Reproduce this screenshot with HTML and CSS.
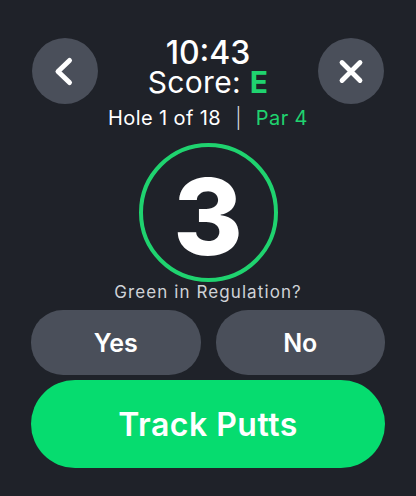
FILE: index.html
```html
<!DOCTYPE html>
<html lang="en">
<head>
    <meta charset="UTF-8">
    <meta name="viewport" content="width=device-width, initial-scale=1.0">
    <title>Hole 1 - Score</title>
    <link rel="stylesheet" href="styles.css">
</head>
<body>
    <main class="screen">
        <header class="top">
            <button class="round-btn" aria-label="Back">
                <svg width="66" height="66" viewBox="0 0 66 66">
                    <path d="M37.5 22.5 L26 33.5 L37.5 44.5" fill="none" stroke="#fff" stroke-width="5" stroke-linecap="round" stroke-linejoin="round"/>
                </svg>
            </button>
            <div class="title">
                <div class="time">10:43</div>
                <div class="score">Score: <span class="green">E</span></div>
                <div class="hole">Hole 1 of 18 <span class="sep">|</span> <span class="par">Par 4</span></div>
            </div>
            <button class="round-btn" aria-label="Close">
                <svg width="66" height="66" viewBox="0 0 66 66">
                    <path d="M24 24.5 L42 42.5 M42 24.5 L24 42.5" fill="none" stroke="#fff" stroke-width="4.8" stroke-linecap="round"/>
                </svg>
            </button>
        </header>

        <section class="strokes">
            <div class="ring">3</div>
            <p class="question">Green in Regulation?</p>
        </section>

        <div class="choice-row">
            <button class="choice">Yes</button>
            <button class="choice">No</button>
        </div>
        <button class="track">Track Putts</button>
    </main>
</body>
</html>
```

FILE: styles.css
```css
body {
    margin: 0;
    background-color: #1f2229;
    font-family: 'Inter', 'Noto Sans', sans-serif;
    color: #fff;
}
button {
    font-family: inherit;
    border: none;
    color: #fff;
    cursor: pointer;
    padding: 0;
}
.screen {
    width: 416px;
    height: 496px;
    box-sizing: border-box;
    padding: 37px 31px 0;
    display: flex;
    flex-direction: column;
}
.top {
    display: flex;
    justify-content: space-between;
    align-items: flex-start;
}
.round-btn {
    width: 66px;
    height: 66px;
    margin: 1px 1px 0;
    border-radius: 50%;
    background-color: #4a4f5a;
    display: flex;
    align-items: center;
    justify-content: center;
}
.title {
    text-align: center;
}
.time {
    font-size: 32px;
    line-height: 31px;
    font-weight: 500;
}
.score {
    font-size: 30px;
    line-height: 28px;
    font-weight: 400;
    letter-spacing: 0.3px;
}
.green {
    color: #1fd36f;
    font-weight: 700;
}
.hole {
    margin-top: 10px;
    font-size: 20px;
    line-height: 24px;
    letter-spacing: 0.4px;
    white-space: nowrap;
}
.sep {
    margin: 0 8px;
    color: #d8dade;
    font-weight: 300;
}
.par {
    color: #1fd36f;
}
.strokes {
    display: flex;
    flex-direction: column;
    align-items: center;
    margin-top: 13px;
}
.ring {
    width: 139px;
    height: 139px;
    box-sizing: border-box;
    border: 4px solid #1fd36f;
    border-radius: 50%;
    display: flex;
    align-items: center;
    justify-content: center;
    padding-top: 8px;
    font-size: 106px;
    font-weight: 800;
    line-height: 1;
}
.question {
    margin: 0;
    font-size: 17px;
    line-height: 20px;
    letter-spacing: 1.1px;
    color: #cfd2d7;
}
.choice-row {
    display: flex;
    gap: 15px;
    margin-top: 8px;
}
.choice {
    flex: 1;
    height: 65px;
    border-radius: 32px;
    background-color: #4a4f5a;
    font-size: 25px;
    font-weight: 600;
}
.track {
    margin-top: 5px;
    height: 88px;
    border-radius: 44px;
    background-color: #06dc6f;
    font-size: 32px;
    font-weight: 600;
    letter-spacing: 0.5px;
}
```
